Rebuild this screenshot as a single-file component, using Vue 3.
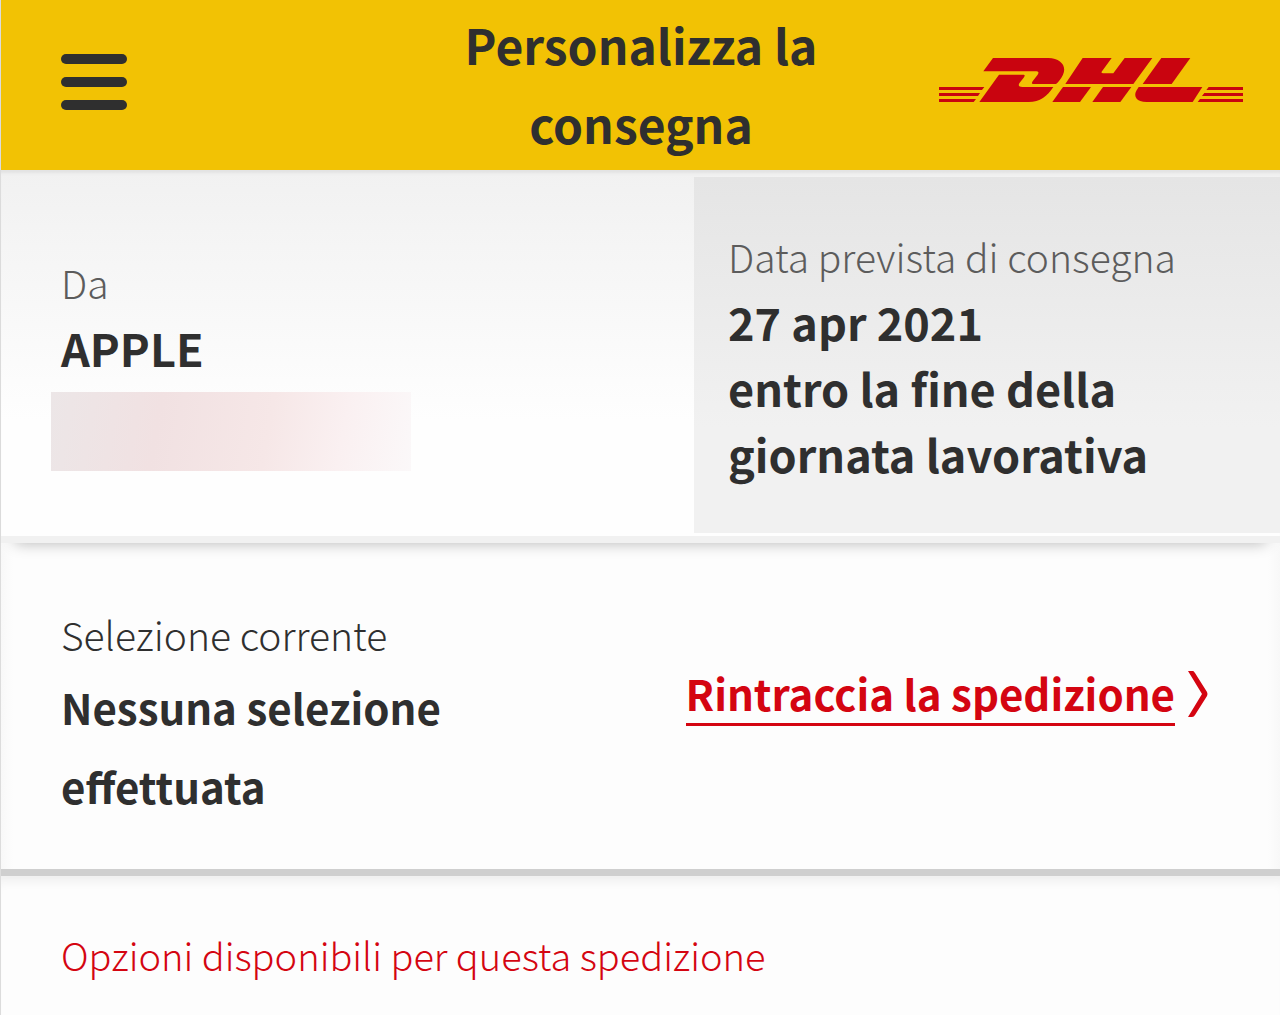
<script setup>
const sender = 'APPLE'
const delivery = ['27 apr 2021', 'entro la fine della', 'giornata lavorativa']
</script>

<template>
  <div class="page">
    <header class="bar">
      <button class="menu" type="button" aria-label="Menu">
        <span></span><span></span><span></span>
      </button>
      <h1>Personalizza la consegna</h1>
      <a class="logo" href="#" aria-label="DHL">
        <svg viewBox="27 54 912 132" width="304" height="44" fill="#c9040f" aria-hidden="true">
          <path d="M189 54H355C392 55 411 78 399 104C393 117 385 126 378 132H312C303 132 305 127 309 122L323 104C328 97 325 94 315 94H160Z" />
          <path d="M207 104H279C286 104 285 108 281 113L269 128C263 137 267 141 277 141H370C352 168 330 186 296 186H148Z" />
          <path d="M458 54H545L516 94C513 98 515 100 519 100H550L584 54H667L610 132H406Z" />
          <path d="M399 141H483L450 186H367Z" />
          <path d="M519 141H604L571 186H487Z" />
          <path d="M694 54H781L725 132H638Z" />
          <path d="M626 141H817L788 186H650C619 186 610 168 619 152Z" />
          <path d="M27 141H163L156 150H27ZM27 159H150L144 168H27ZM27 177H138L131 186H27Z" />
          <path d="M836 141H939V150H829ZM823 159H939V168H816ZM810 177H939V186H803Z" />
        </svg>
      </a>
    </header>

    <section class="summary">
      <div class="from">
        <p class="label muted">Da</p>
        <p class="value">{{ sender }}</p>
        <div class="redacted"></div>
      </div>
      <div class="expected">
        <p class="label muted">Data prevista di consegna</p>
        <p v-for="line in delivery" :key="line" class="value">{{ line }}</p>
      </div>
    </section>

    <section class="selection">
      <div class="current">
        <p class="label">Selezione corrente</p>
        <p class="choice">Nessuna selezione effettuata</p>
      </div>
      <a class="track" href="#">
        <span>Rintraccia la spedizione</span>
        <svg viewBox="0 0 20 46" width="20" height="46" fill="#d40511" aria-hidden="true">
          <path d="M0 0H5C6 0 6 1 7 2L19 21Q20 23 19 25L7 44Q6 46 4 46H0L14 23Z" />
        </svg>
      </a>
    </section>

    <section class="options">
      <h2>Opzioni disponibili per questa spedizione</h2>
    </section>
  </div>
</template>

<style>
body {
  margin: 0;
  background: #fdfdfd;
}
</style>

<style scoped>
.page {
  border-left: 1px solid #dcdcdc;
  font-family: "Noto Sans CJK SC", "Noto Sans", sans-serif;
  color: #2f2f2f;
}

h1,
h2,
p {
  margin: 0;
}

.bar {
  display: grid;
  grid-template-columns: 1fr 400px 1fr;
  align-items: center;
  padding: 5px 37px 7px 60px;
  background: #f2c204;
}

.menu {
  display: flex;
  flex-direction: column;
  gap: 13px;
  width: 66px;
  margin-bottom: 4px;
  padding: 0;
  border: 0;
  background: none;
  cursor: pointer;
}

.menu span {
  height: 10px;
  border-radius: 5px;
  background: #2f2f2f;
}

h1 {
  padding-right: 22px;
  font-size: 48px;
  line-height: 79px;
  font-weight: 700;
  text-align: center;
}

.logo {
  justify-self: end;
  display: flex;
  margin-bottom: 8px;
}

.summary {
  position: relative;
  display: grid;
  grid-template-columns: 693fr 586fr;
  border-bottom: 7px solid #f1f1f1;
  background: linear-gradient(#f1f1f1, #fefefe 250px);
  box-shadow: inset 0 5px 3px -2px #e2e2e2, 0 14px 14px -14px #b4b4b4;
}

.from {
  padding: 79px 0 65px 60px;
}

.expected {
  margin: 7px 0 3px;
  padding: 46px 0 46px 34px;
  background: linear-gradient(#e5e5e5, #f1f1f1 250px);
}

.label {
  font-size: 39px;
  line-height: 66px;
  font-weight: 300;
}

.muted {
  color: #5c5c5c;
}

.value {
  font-size: 45px;
  line-height: 66px;
  font-weight: 700;
}

.redacted {
  width: 360px;
  height: 79px;
  margin: 11px 0 0 -10px;
  background: linear-gradient(100deg, #ece6e7, #f1e1e2 30%, #f6e7e7 60%, #faf0f1 80%, #fbf8f9);
}

.selection {
  display: flex;
  align-items: flex-start;
  justify-content: space-between;
  padding: 58px 72px 44px 60px;
  border-bottom: 7px solid #cfcfcf;
  background: linear-gradient(90deg, #f8f8f8, #fdfdfd 12px, #fdfdfd calc(100% - 12px), #f8f8f8);
}

.current {
  width: 420px;
}

.choice {
  font-size: 42px;
  line-height: 79px;
  font-weight: 700;
}

.track {
  display: flex;
  align-items: center;
  gap: 13px;
  margin-top: 64px;
  color: #d40511;
  font-size: 42px;
  line-height: 56px;
  font-weight: 700;
  text-decoration: none;
}

.track span {
  padding-bottom: 2px;
  border-bottom: 3px solid #d40511;
}

.track svg {
  margin-bottom: 4px;
}

.options {
  padding: 46px 60px 27px;
  background: #fdfdfd;
  box-shadow: inset 0 12px 12px -8px #ececec;
}

h2 {
  color: #d40511;
  font-size: 38px;
  line-height: 66px;
  font-weight: 300;
}
</style>
